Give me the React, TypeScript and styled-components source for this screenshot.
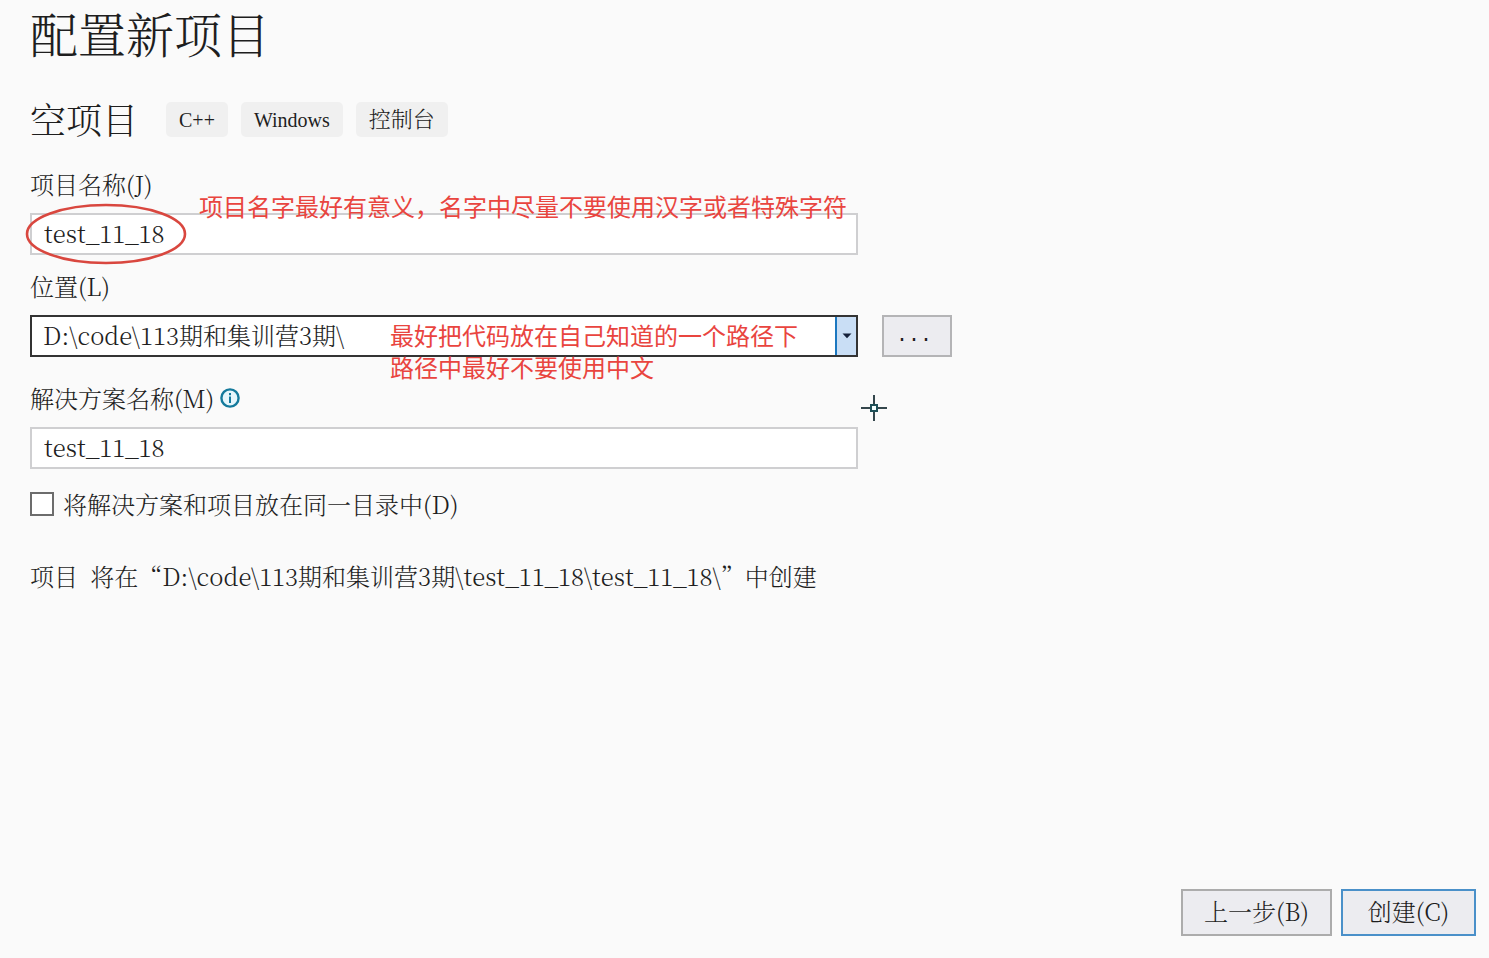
import React from "react";
import styled, { createGlobalStyle } from "styled-components";

const song = '"Noto Serif CJK SC", "Noto Sans CJK SC", serif';
const hei = '"Noto Sans CJK SC", sans-serif';
const mono = '"Liberation Mono", monospace';
const roman = '"Liberation Serif", serif';

const GlobalStyle = createGlobalStyle`
  *, *::before, *::after { box-sizing: border-box; }
  body {
    margin: 0;
    background: #fafafa;
    color: #1e1e1e;
    font-family: ${song};
    font-weight: 300;
    font-size: 24px;
    line-height: 32px;
  }
  input, select, button { font: inherit; color: inherit; margin: 0; }
`;

const Page = styled.div`
  display: flex;
  flex-direction: column;
  justify-content: space-between;
  min-height: 100vh;
  padding: 0 13px 22px 30px;
`;

const Title = styled.h1`
  margin: 0;
  font-size: 48px;
  font-weight: 300;
  line-height: 66px;
`;

const Template = styled.section`
  display: flex;
  align-items: center;
  margin-top: 29px;
  height: 48px;
`;

const TemplateName = styled.h2`
  margin: 0 28px 0 0;
  font-size: 36px;
  font-weight: 300;
  line-height: 48px;
`;

const Tags = styled.ul`
  display: flex;
  gap: 13px;
  margin: 0;
  padding: 0;
  list-style: none;
`;

const Tag = styled.li<{ $latin?: boolean }>`
  height: 35px;
  padding: 0 13px;
  border-radius: 5px;
  background: #f0f0f0;
  font-family: ${(p) => (p.$latin ? roman : song)};
  font-size: ${(p) => (p.$latin ? 20 : 22)}px;
  line-height: ${(p) => (p.$latin ? 36 : 32)}px;
`;

const Form = styled.form`
  display: flex;
  flex-direction: column;
  max-width: 922px;
  margin-top: 25px;
`;

const Field = styled.div<{ $after: number }>`
  position: relative;
  display: grid;
  grid-template-columns: minmax(0, 1fr) 70px;
  column-gap: 24px;
  row-gap: 13px;
  margin-bottom: ${(p) => p.$after}px;
`;

const LabelLine = styled.div`
  grid-column: 1 / -1;
  display: flex;
  align-items: center;
  gap: 6px;
  height: 32px;
`;

const TextBox = styled.input`
  width: 100%;
  height: 42px;
  padding: 0 12px 4px;
  border: 2px solid #cfcfd1;
  border-radius: 0;
  background: #fff;
  outline: none;
`;

const Combo = styled.div`
  position: relative;
  height: 42px;
`;

const Select = styled.select`
  width: 100%;
  height: 42px;
  padding: 0 30px 2px 11px;
  border: 2px solid #333;
  border-radius: 0;
  background: #fff;
  appearance: none;
  outline: none;
`;

const Drop = styled.span`
  position: absolute;
  top: 2px;
  right: 2px;
  bottom: 2px;
  display: flex;
  align-items: center;
  justify-content: center;
  width: 21px;
  border-left: 2px solid #1c78c0;
  background: #c9def5;
  pointer-events: none;
`;

const Button = styled.button<{ $primary?: boolean }>`
  min-width: ${(p) => (p.$primary ? 135 : 151)}px;
  height: 47px;
  padding: 0 0 4px;
  border: 2px solid ${(p) => (p.$primary ? "#4a90c9" : "#acacac")};
  border-radius: 0;
  background: #ececf0;
`;

const BrowseButton = styled.button`
  height: 42px;
  padding: 0 6px 0 0;
  border: 2px solid #b4b4b6;
  border-radius: 0;
  background: #ececf0;
  font-family: ${mono};
  font-size: 20px;
`;

const Note = styled.p<{ $left: number; $top: number }>`
  position: absolute;
  left: ${(p) => p.$left}px;
  top: ${(p) => p.$top}px;
  margin: 0;
  color: #e9453f;
  font-family: ${hei};
  font-weight: 400;
  white-space: nowrap;
  pointer-events: none;
`;

const Ring = styled.svg`
  position: absolute;
  left: -5px;
  top: 35px;
  pointer-events: none;
`;

const Crosshair = styled.svg`
  position: absolute;
  left: 830px;
  top: 12px;
  pointer-events: none;
`;

const CheckLine = styled.label`
  display: flex;
  align-items: center;
  gap: 9px;
`;

const Check = styled.input`
  appearance: none;
  width: 24px;
  height: 24px;
  border: 2px solid #6c6c6c;
  background: #fff;
`;

const Summary = styled.p`
  margin: 40px 0 0;
`;

const Kind = styled.span`
  margin-right: 6px;
`;

const Actions = styled.footer`
  display: flex;
  justify-content: flex-end;
  gap: 9px;
`;

const InfoIcon = () => (
  <svg width="20" height="20" viewBox="0 0 20 20" fill="none" aria-hidden="true">
    <circle cx="10" cy="10" r="8.6" fill="#e6f6fc" stroke="#147a9c" strokeWidth="2.4" />
    <path d="M10 8.6V15" stroke="#147a9c" strokeWidth="2" />
    <path d="M10 5V7.2" stroke="#147a9c" strokeWidth="2" />
  </svg>
);

export default function App() {
  return (
    <Page>
      <GlobalStyle />
      <main>
        <Title>配置新项目</Title>
        <Template>
          <TemplateName>空项目</TemplateName>
          <Tags>
            <Tag $latin>C++</Tag>
            <Tag $latin>Windows</Tag>
            <Tag>控制台</Tag>
          </Tags>
        </Template>

        <Form onSubmit={(e) => e.preventDefault()}>
          <Field $after={15}>
            <LabelLine>
              <label htmlFor="project">项目名称(J)</label>
            </LabelLine>
            <TextBox id="project" defaultValue="test_11_18" />
            <Ring width="162" height="62" viewBox="0 0 162 62" fill="none" aria-hidden="true">
              <ellipse cx="81" cy="31" rx="79" ry="29" stroke="#d9473f" strokeWidth="2.6" />
            </Ring>
            <Note $left={169} $top={22}>项目名字最好有意义，名字中尽量不要使用汉字或者特殊字符</Note>
          </Field>

          <Field $after={25}>
            <LabelLine>
              <label htmlFor="location">位置(L)</label>
            </LabelLine>
            <Combo>
              <Select id="location">
                <option>D:\code\113期和集训营3期\</option>
              </Select>
              <Drop>
                <svg width="10" height="6" viewBox="0 0 10 6" aria-hidden="true">
                  <path d="M0.5 0.5H9.5L5 5.2Z" fill="#14203a" />
                </svg>
              </Drop>
            </Combo>
            <BrowseButton type="button">...</BrowseButton>
            <Note $left={360} $top={49}>
              最好把代码放在自己知道的一个路径下
              <br />
              路径中最好不要使用中文
            </Note>
          </Field>

          <Field $after={19}>
            <LabelLine>
              <label htmlFor="solution">解决方案名称(M)</label>
              <InfoIcon />
            </LabelLine>
            <TextBox id="solution" defaultValue="test_11_18" />
            <Crosshair width="28" height="28" viewBox="0 0 28 28" fill="none" aria-hidden="true">
              <path d="M14 1V10M14 18V27M1 14H10M18 14H27" stroke="#34464c" strokeWidth="2" />
              <rect x="11" y="11" width="6" height="6" fill="#f4ffff" stroke="#1e5058" strokeWidth="2" />
            </Crosshair>
          </Field>

          <CheckLine>
            <Check type="checkbox" />
            <span>将解决方案和项目放在同一目录中(D)</span>
          </CheckLine>
        </Form>

        <Summary>
          <Kind>项目</Kind> 将在“D:\code\113期和集训营3期\test_11_18\test_11_18\”中创建
        </Summary>
      </main>

      <Actions>
        <Button type="button">上一步(B)</Button>
        <Button type="button" $primary>创建(C)</Button>
      </Actions>
    </Page>
  );
}
